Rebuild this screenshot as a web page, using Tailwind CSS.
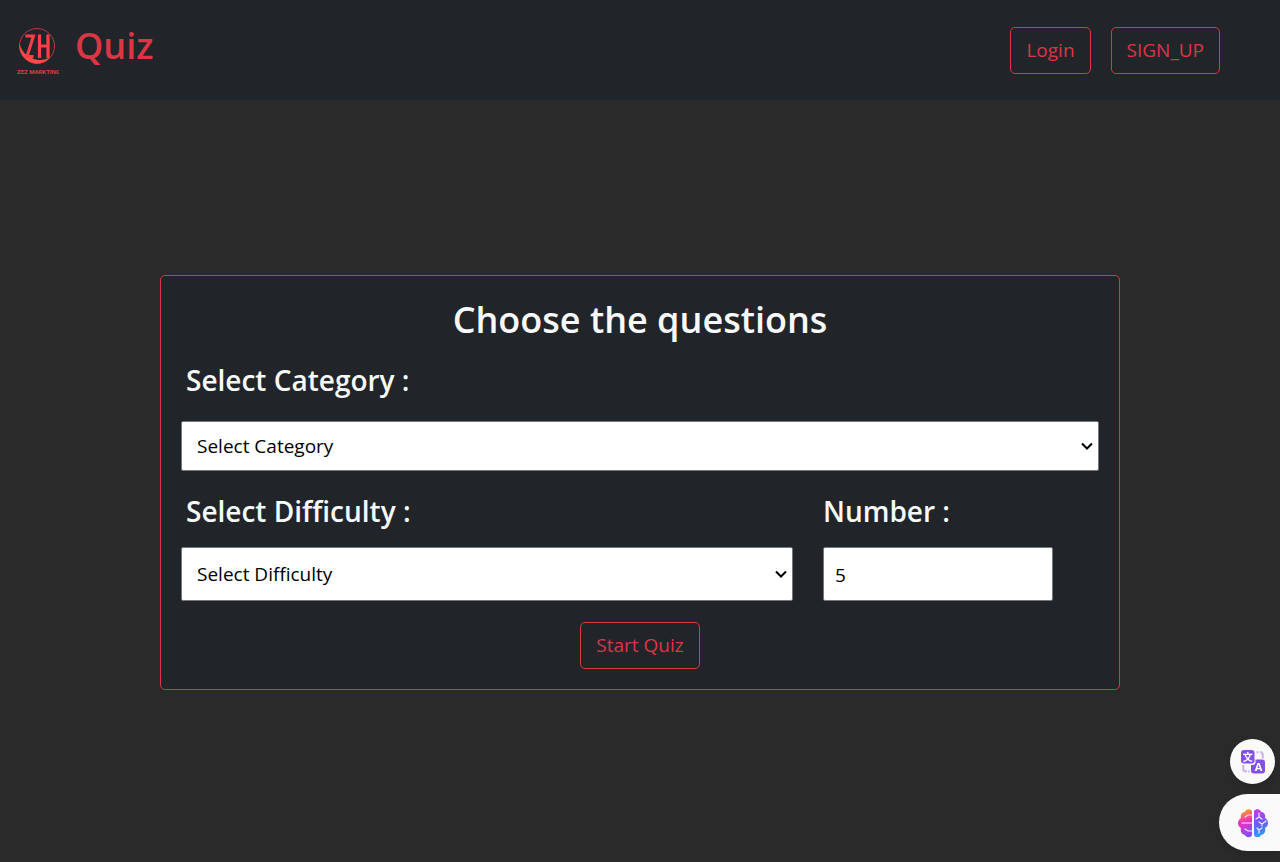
<!DOCTYPE html>
<html lang="en">
<head>
<meta charset="utf-8">
<meta name="viewport" content="width=device-width, initial-scale=1">
<title>Quiz</title>
<script src="https://cdn.jsdelivr.net/npm/@tailwindcss/browser@4"></script>
</head>
<body class="flex min-h-screen flex-col bg-[#2a2a2a] font-['Segoe_UI','Open_Sans',sans-serif] text-[#f8f9fa]">
<header class="flex h-[100px] items-center justify-between bg-[#212529] pr-[60px] pl-[15px] text-[#dc3545]">
  <a href="#" class="flex items-center gap-4">
    <svg class="h-[52px] w-[44px]" viewBox="0 0 44 52" aria-label="ZEZ Markting" role="img">
      <circle cx="22" cy="22" r="17.500" fill="none" stroke="#b43a42" stroke-width="1"/>
      <path d="M4.500 19C3.500 30 12 40 23 39.500C29 39 33 36 35 33C29 37 20 37 13 32C8 28.500 5.500 24 4.500 19Z" fill="#fb4a4a"/>
      <path d="M10.500 12H18.500L12 32.500H18.500" fill="none" stroke="#fb4045" stroke-width="3"/>
      <path d="M24.500 10.500V34M33 10.500V34M24.500 22H33" fill="none" stroke="#fb4045" stroke-width="3.200"/>
      <text x="2" y="50" class="font-['Liberation_Sans_Narrow','Roboto',sans-serif] text-[6px] font-bold" fill="#dc3d45">ZEZ MARKTING</text>
    </svg>
    <span class="pb-2 text-[36px] leading-[48px] font-semibold">Quiz</span>
  </a>
  <nav class="flex gap-5">
    <button type="button" class="rounded-[5px] border border-[#dc3545] px-[15px] py-2 text-[19px] leading-[29px]">Login</button>
    <button type="button" class="rounded-[5px] border border-[#dc3545] px-[15px] py-2 text-[19px] leading-[29px]">SIGN_UP</button>
  </nav>
</header>
<main class="flex grow items-center justify-center pt-[2px]">
  <form class="w-3/4 rounded-[5px] border border-[#dc3545] bg-[#212529] p-5">
    <h1 class="text-center text-[36px] leading-[48px] font-semibold">Choose the questions</h1>
    <label for="category" class="mt-4 block px-[5px] text-[28px] leading-[40px] font-semibold">Select Category :</label>
    <div class="relative mt-[21px]">
      <select id="category" class="block h-[50px] w-full appearance-none rounded-[2px] border border-[#767676] bg-white px-[15px] pt-[2px] text-[19px] text-black">
        <option>Select Category</option>
      </select>
      <svg class="pointer-events-none absolute top-1/2 right-[6px] h-2 w-3 -translate-y-1/2" viewBox="0 0 12 8" fill="none" stroke="#000" stroke-width="2" aria-hidden="true"><path d="M1 1.500L6 6.500L11 1.500"/></svg>
    </div>
    <div class="mt-5 flex">
      <div class="w-2/3">
        <label for="difficulty" class="block px-[5px] text-[28px] leading-[40px] font-semibold">Select Difficulty :</label>
        <div class="relative mt-4">
          <select id="difficulty" class="block h-[54px] w-full appearance-none rounded-[2px] border border-[#767676] bg-white px-[15px] pt-[2px] text-[19px] text-black">
            <option>Select Difficulty</option>
          </select>
          <svg class="pointer-events-none absolute top-1/2 right-[6px] h-2 w-3 -translate-y-1/2" viewBox="0 0 12 8" fill="none" stroke="#000" stroke-width="2" aria-hidden="true"><path d="M1 1.500L6 6.500L11 1.500"/></svg>
        </div>
      </div>
      <div class="w-1/3 pl-[30px]">
        <label for="number" class="block text-[28px] leading-[40px] font-semibold">Number :</label>
        <input id="number" type="number" value="5" class="mt-4 block h-[54px] w-5/6 rounded-[2px] border border-[#767676] bg-white px-[11px] pt-[2px] text-[19px] text-black">
      </div>
    </div>
    <button type="submit" class="mx-auto mt-[21px] block rounded-[5px] border border-[#dc3545] px-[15px] py-2 text-[19px] leading-[29px] text-[#dc3545]">Start Quiz</button>
  </form>
</main>
<aside class="fixed right-0 bottom-[11px] flex flex-col items-end gap-[10px]">
  <button type="button" aria-label="Translate" class="mr-[5px] flex size-[45px] items-center justify-center rounded-full bg-[#fafafb] shadow-md">
    <svg class="size-6" viewBox="0 0 24 24" fill="none" aria-hidden="true">
      <path d="M15.500 2.200H17.500M19 2.200A2.800 2.800 0 0 1 21.800 5V8.500M2.200 15V18.500A2.800 2.800 0 0 0 5 21.300H6M7 21.300H8.500" stroke="#cdb9f5" stroke-width="2.200"/>
      <path d="M14.500 9.500H21A3 3 0 0 1 24 12.500V20.500A3 3 0 0 1 21 23.500H13A3 3 0 0 1 10 20.500V15H11.500A3 3 0 0 0 14.500 12Z" fill="#8250e6"/>
      <rect x="0" y="0" width="13.500" height="13.500" rx="3" fill="#8250e6"/>
      <text x="6.750" y="10.500" text-anchor="middle" class="font-['Noto_Sans_CJK_SC',sans-serif] text-[10px] font-bold" fill="#fff">文</text>
      <text x="17.500" y="20.500" text-anchor="middle" class="font-['Open_Sans',sans-serif] text-[11px] font-bold" fill="#fff">A</text>
    </svg>
  </button>
  <button type="button" aria-label="Assistant" class="flex h-[57px] w-[61px] items-center rounded-l-full bg-[#fafafa] pl-[19px] shadow-md">
    <svg class="size-[30px]" viewBox="0 0 30 30" fill="none" aria-hidden="true">
      <defs>
        <linearGradient id="left" x1="5" y1="3" x2="13" y2="28" gradientUnits="userSpaceOnUse"><stop stop-color="#ff9b22"/><stop offset=".4" stop-color="#ee2fc0"/><stop offset="1" stop-color="#7c50f8"/></linearGradient>
        <linearGradient id="right" x1="18" y1="2" x2="24" y2="28" gradientUnits="userSpaceOnUse"><stop stop-color="#c43ce8"/><stop offset=".5" stop-color="#6a5cf8"/><stop offset="1" stop-color="#28a0fa"/></linearGradient>
      </defs>
      <path d="M14 3C12 0 7 1 7 4C4 4 2 7 3 10C-1 12-1 18 3 20C2 24 4 27 7 27C8 30 13 30 14 27Z" fill="url(#left)"/>
      <path d="M16 3C18 0 23 1 23 4C26 4 28 7 27 10C31 12 31 18 27 20C28 24 26 27 23 27C22 30 17 30 16 27Z" fill="url(#right)"/>
      <path d="M14 7H10L7 9M14 15H4M14 23H10L7 21M18 11L21 9V5M21 9L24 11M21 14L24 16L28 13M24 16V18M19 20L21 22V25M21 22L24 20" stroke="#f8e6ff" stroke-width="1.200" stroke-linecap="round"/>
    </svg>
  </button>
</aside>
</body>
</html>
